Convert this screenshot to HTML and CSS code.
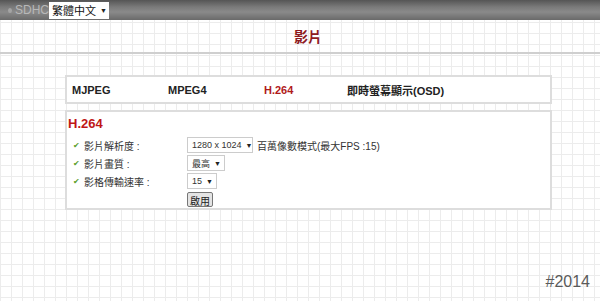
FILE: index.html
```html
<!DOCTYPE html>
<html lang="zh-Hant">
<head>
    <meta charset="UTF-8">
    <title>影片</title>
    <link rel="stylesheet" href="styles.css">
</head>
<body>
    <div class="topbar">
        <span class="logo"><span class="disc"></span>SDHC</span>
        <div class="lang">繁體中文<span class="arrow">▼</span></div>
    </div>

    <header class="title-band">
        <h1>影片</h1>
    </header>

    <div class="content">
        <div class="tabs">
            <span class="tab t1">MJPEG</span>
            <span class="tab t2">MPEG4</span>
            <span class="tab t3 active">H.264</span>
            <span class="tab">即時螢幕顯示(OSD)</span>
        </div>

        <div class="panel">
            <h2>H.264</h2>
            <div class="row">
                <span class="label"><span class="check">✔</span>影片解析度 :</span>
                <span class="sel w1">1280 x 1024<span class="arrow">▼</span></span>
                <span class="note">百萬像數模式(最大FPS :15)</span>
            </div>
            <div class="row">
                <span class="label"><span class="check">✔</span>影片畫質 :</span>
                <span class="sel w2">最高<span class="arrow">▼</span></span>
            </div>
            <div class="row">
                <span class="label"><span class="check">✔</span>影格傳輸速率 :</span>
                <span class="sel w3">15<span class="arrow">▼</span></span>
            </div>
            <div class="row">
                <span class="label"></span>
                <button class="apply">啟用</button>
            </div>
        </div>
    </div>

    <div class="year">#2014</div>
</body>
</html>
```

FILE: styles.css
```css
* {
    margin: 0;
    padding: 0;
    box-sizing: border-box;
}

body {
    font-family: 'Liberation Sans', 'Noto Sans CJK TC', sans-serif;
    color: #222;
    height: 301px;
    overflow: hidden;
    background-color: #fff;
    background-image:
        linear-gradient(to right, #ececec 1px, transparent 1px),
        linear-gradient(to bottom, #ececec 1px, transparent 1px);
    background-size: 11px 11px;
    position: relative;
    white-space: nowrap;
}

/* Barra superior */
.topbar {
    height: 20px;
    background: linear-gradient(to bottom, #555 0%, #7a7a7a 35%, #8a8a8a 60%, #6a6a6a 100%);
    display: flex;
    align-items: center;
    padding-left: 8px;
}

.logo {
    display: flex;
    align-items: center;
    color: #b8b8b8;
    font-size: 12px;
    width: 41px;
    flex-shrink: 0;
}

.disc {
    width: 9px;
    height: 5px;
    border-radius: 50%;
    background: #a4a4a4;
    margin-right: 3px;
}

.lang {
    background: #fff;
    height: 17px;
    width: 60px;
    flex-shrink: 0;
    display: flex;
    align-items: center;
    justify-content: space-between;
    padding: 0 4px 0 3px;
    font-size: 11px;
    color: #111;
}

.arrow {
    font-size: 7px;
    color: #222;
    margin-left: 4px;
}

/* Título */
.title-band {
    height: 34px;
    border-bottom: 2px solid #cfcfcf;
    display: flex;
    align-items: center;
    justify-content: center;
    padding-left: 16px;
}

.title-band h1 {
    font-size: 14px;
    color: #8e1b1f;
    font-weight: bold;
}

/* Conteúdo */
.content {
    margin-left: 65px;
    width: 487px;
    padding-top: 21px;
}

.tabs {
    height: 29px;
    background: #fff;
    border: 2px solid #ddd;
    display: flex;
    align-items: center;
    padding-left: 5px;
    font-size: 11px;
    font-weight: bold;
}

.tab.t1 { width: 96px; }
.tab.t2 { width: 96px; }
.tab.t3 { width: 83px; }

.tab.active {
    color: #b01a1a;
}

.panel {
    margin-top: 6px;
    height: 100px;
    background: #fff;
    border: 2px solid #ddd;
    padding: 4px 0 0 1px;
}

.panel h2 {
    font-size: 13px;
    color: #c01616;
    margin-bottom: 5px;
}

.row {
    display: flex;
    align-items: center;
    height: 18px;
    font-size: 10px;
    color: #333;
}

.label {
    width: 119px;
    flex-shrink: 0;
    display: flex;
    align-items: center;
    padding-left: 5px;
}

.check {
    color: #5aa02c;
    font-size: 8px;
    width: 11px;
}

.sel {
    height: 16px;
    flex-shrink: 0;
    border: 1px solid #ccc;
    background: #fff;
    display: flex;
    align-items: center;
    justify-content: space-between;
    padding: 0 3px 0 4px;
    font-size: 9px;
}

.sel.w1 { width: 66px; }
.sel.w2 { width: 38px; }
.sel.w3 { width: 30px; }

.note {
    margin-left: 4px;
}

.apply {
    font-family: inherit;
    font-size: 10px;
    height: 15px;
    padding: 0 2px;
    background: #e4e4e4;
    border: 1px solid #777;
    border-radius: 2px;
    color: #222;
}

.year {
    position: absolute;
    right: 10px;
    bottom: 10px;
    font-family: 'Liberation Sans', sans-serif;
    font-size: 16px;
    color: #5a5a5a;
}
```
